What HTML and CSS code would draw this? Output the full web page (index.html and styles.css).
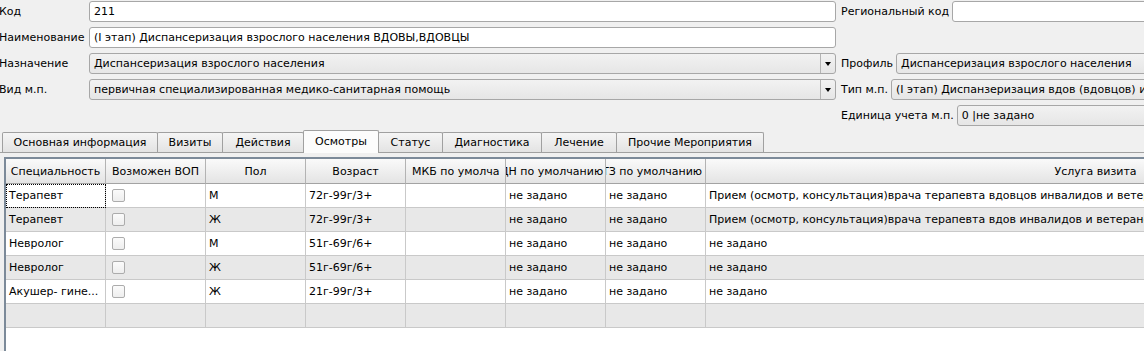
FILE: index.html
```html
<!DOCTYPE html>
<html lang="ru">
<head>
<meta charset="utf-8">
<title>Осмотры</title>
<link rel="stylesheet" href="styles.css">
</head>
<body>
<div class="page">
  <div class="form">
    <div class="row">
      <span class="lbl">Код</span>
      <div class="field input">211</div>
      <span class="rlbl">Региональный код</span>
      <div class="rfield input"></div>
    </div>
    <div class="row">
      <span class="lbl">Наименование</span>
      <div class="field input">(I этап) Диспансеризация взрослого населения ВДОВЫ,ВДОВЦЫ</div>
    </div>
    <div class="row">
      <span class="lbl">Назначение</span>
      <div class="field combo"><span class="ctext">Диспансеризация взрослого населения</span><span class="arrow"><i class="tri"></i></span></div>
      <span class="rlbl">Профиль</span>
      <div class="rfield combo"><span class="ctext">Диспансеризация взрослого населения</span></div>
    </div>
    <div class="row">
      <span class="lbl">Вид м.п.</span>
      <div class="field combo"><span class="ctext">первичная специализированная медико-санитарная помощь</span><span class="arrow"><i class="tri"></i></span></div>
      <span class="rlbl">Тип м.п.</span>
      <div class="rfield combo"><span class="ctext">(I этап) Диспанзеризация вдов (вдовцов) инвалидов и ветеранов</span></div>
    </div>
    <div class="row">
      <span class="lbl"></span>
      <div class="field blank"></div>
      <span class="rlbl">Единица учета м.п.</span>
      <div class="rfield combo"><span class="ctext">0 |не задано</span></div>
    </div>
  </div>

  <div class="tabs">
    <div class="tab t-main">Основная информация</div>
    <div class="tab t-visits">Визиты</div>
    <div class="tab t-actions">Действия</div>
    <div class="tab t-exams active">Осмотры</div>
    <div class="tab t-status">Статус</div>
    <div class="tab t-diag">Диагностика</div>
    <div class="tab t-treat">Лечение</div>
    <div class="tab t-other">Прочие Мероприятия</div>
  </div>

  <div class="pane">
    <div class="table">
      <div class="tr head">
        <div class="th">Специальность</div>
        <div class="th">Возможен ВОП</div>
        <div class="th">Пол</div>
        <div class="th">Возраст</div>
        <div class="th left">МКБ по умолча</div>
        <div class="th left"><span class="shift">ДН по умолчанию</span></div>
        <div class="th left"><span class="shift shift-t">ТЗ по умолчанию</span></div>
        <div class="th">Услуга визита</div>
      </div>
      <div class="tr">
        <div class="td focus">Терапевт</div>
        <div class="td"><span class="cb"></span></div>
        <div class="td">М</div>
        <div class="td">72г-99г/3+</div>
        <div class="td"></div>
        <div class="td">не задано</div>
        <div class="td">не задано</div>
        <div class="td">Прием (осмотр, консультация)врача терапевта вдовцов инвалидов и ветеранов боевых действий</div>
      </div>
      <div class="tr alt">
        <div class="td">Терапевт</div>
        <div class="td"><span class="cb"></span></div>
        <div class="td">Ж</div>
        <div class="td">72г-99г/3+</div>
        <div class="td"></div>
        <div class="td">не задано</div>
        <div class="td">не задано</div>
        <div class="td">Прием (осмотр, консультация)врача терапевта вдов инвалидов и ветеранов боевых действий</div>
      </div>
      <div class="tr">
        <div class="td">Невролог</div>
        <div class="td"><span class="cb"></span></div>
        <div class="td">М</div>
        <div class="td">51г-69г/6+</div>
        <div class="td"></div>
        <div class="td">не задано</div>
        <div class="td">не задано</div>
        <div class="td">не задано</div>
      </div>
      <div class="tr alt">
        <div class="td">Невролог</div>
        <div class="td"><span class="cb"></span></div>
        <div class="td">Ж</div>
        <div class="td">51г-69г/6+</div>
        <div class="td"></div>
        <div class="td">не задано</div>
        <div class="td">не задано</div>
        <div class="td">не задано</div>
      </div>
      <div class="tr">
        <div class="td">Акушер- гине...</div>
        <div class="td"><span class="cb"></span></div>
        <div class="td">Ж</div>
        <div class="td">21г-99г/3+</div>
        <div class="td"></div>
        <div class="td">не задано</div>
        <div class="td">не задано</div>
        <div class="td">не задано</div>
      </div>
      <div class="tr alt">
        <div class="td"></div>
        <div class="td"></div>
        <div class="td"></div>
        <div class="td"></div>
        <div class="td"></div>
        <div class="td"></div>
        <div class="td"></div>
        <div class="td"></div>
      </div>
      <div class="empty"></div>
    </div>
  </div>
</div>
</body>
</html>
```

FILE: styles.css
```css
* { box-sizing: border-box; }
html, body {
  margin: 0;
  padding: 0;
  background: #f0f0f0;
  overflow: hidden;
}
body {
  font-family: "DejaVu Sans", Verdana, sans-serif;
  font-size: 11px;
  color: #000;
}
.page {
  width: 1600px;
}
.form {
  padding-top: 1px;
  display: flex;
  flex-direction: column;
  gap: 5px;
}
.row {
  display: flex;
  align-items: center;
  height: 21px;
}
.lbl {
  width: 90px;
  margin-left: -1px;
  white-space: nowrap;
}
.field {
  width: 747px;
  height: 21px;
  flex: none;
}
.rlbl {
  margin-left: 5px;
  margin-right: 3px;
  white-space: nowrap;
}
.rfield {
  width: 500px;
  height: 21px;
}
.input {
  background: #fff;
  border: 1px solid #a7a7a7;
  border-radius: 3px;
  padding: 0 4px;
  line-height: 19px;
  white-space: nowrap;
  overflow: hidden;
}
.blank {
  visibility: hidden;
}
.combo {
  display: flex;
  background: linear-gradient(#f2f2f2, #e6e6e6);
  border: 1px solid #a7a7a7;
  border-radius: 3px;
  line-height: 19px;
  overflow: hidden;
}
.ctext {
  flex: 1;
  padding: 0 4px;
  white-space: nowrap;
  overflow: hidden;
}
.arrow {
  width: 15px;
  flex: none;
  border-left: 1px solid #b4b4b4;
  display: flex;
  align-items: center;
  justify-content: center;
}
.tri {
  width: 0;
  height: 0;
  border-left: 3.5px solid transparent;
  border-right: 3.5px solid transparent;
  border-top: 4px solid #000;
}

.tabs {
  display: flex;
  align-items: flex-end;
  height: 26px;
  padding-left: 2px;
}
.tab {
  height: 20px;
  line-height: 19px;
  text-align: center;
  border: 1px solid #a0a0a0;
  border-bottom: none;
  border-radius: 2px 2px 0 0;
  background: linear-gradient(#f5f5f5, #e3e3e3);
  margin-left: -1px;
  white-space: nowrap;
  flex: none;
}
.tab:first-child { margin-left: 0; }
.t-main { width: 156px; }
.t-visits { width: 66px; }
.t-actions { width: 82px; }
.t-exams { width: 76px; }
.t-status { width: 65px; }
.t-diag { width: 100px; }
.t-treat { width: 76px; }
.t-other { width: 148px; }
.tab.active {
  height: 23px;
  line-height: 22px;
  background: #fcfcfc;
  margin-bottom: -1px;
  position: relative;
  z-index: 1;
}

.pane {
  border-top: 1px solid #a0a0a0;
  padding: 4px 0 0 4px;
}
.table {
  border-top: 2px solid #7c8a99;
  border-left: 2px solid #7c8a99;
  background: #fff;
}
.tr {
  display: grid;
  grid-template-columns: repeat(7, 100px) 780px;
  height: 24px;
}
.tr.head { height: 25px; }
.tr.alt { background: #e8e8e8; }
.th {
  background: linear-gradient(#fafafa, #e4e4e4);
  border-right: 1px solid #b3b3b3;
  border-bottom: 1px solid #a3a3a3;
  display: flex;
  align-items: center;
  justify-content: center;
  white-space: nowrap;
  overflow: hidden;
}
.th.left {
  justify-content: flex-start;
  padding-left: 6px;
}
.shift {
  margin-left: -12px;
}
.shift.shift-t {
  margin-left: -10px;
}
.td {
  border-right: 1px solid #c9c9c9;
  border-bottom: 1px solid #c9c9c9;
  padding-left: 3px;
  display: flex;
  align-items: center;
  white-space: nowrap;
  overflow: hidden;
}
.td.focus {
  outline: 1px dotted #000;
  outline-offset: -1px;
}
.cb {
  width: 13px;
  height: 13px;
  margin-left: 3px;
  border: 1px solid #acacac;
  border-radius: 2px;
  background: linear-gradient(#fbfbfb, #eeeeee);
}
.empty {
  height: 40px;
}
```
